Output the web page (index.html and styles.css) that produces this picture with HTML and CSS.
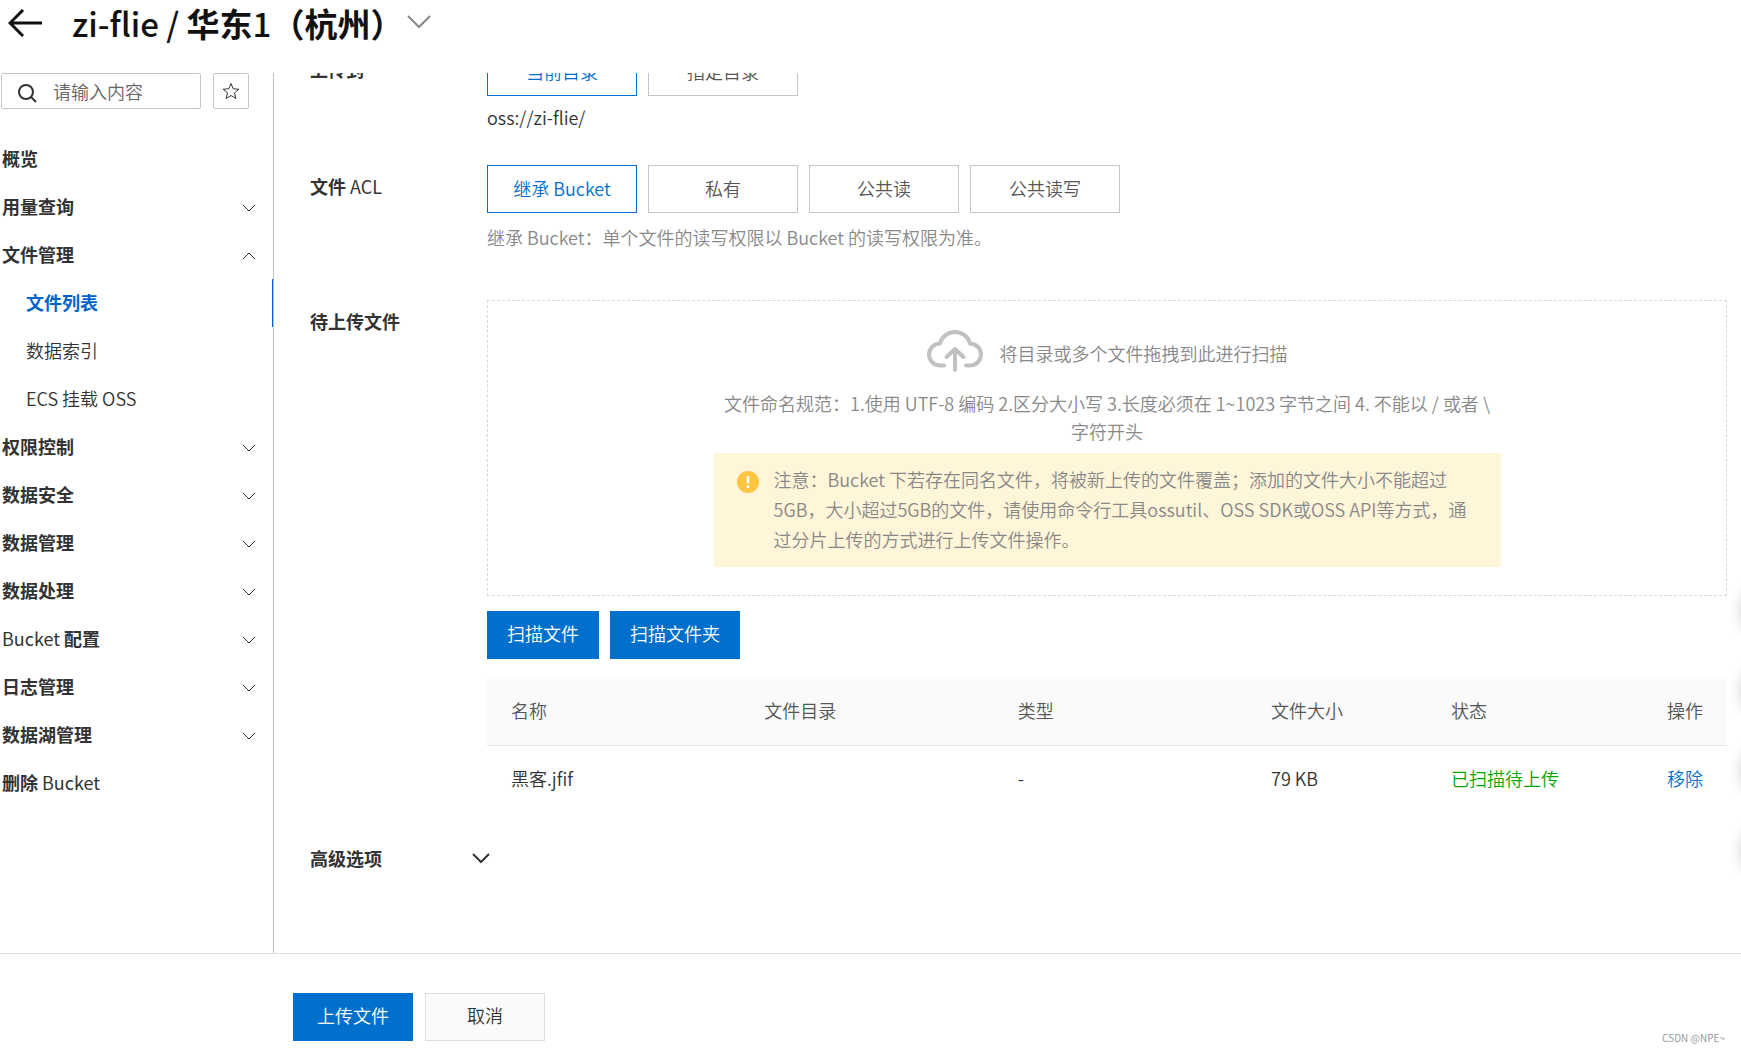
FILE: index.html
```html
<!DOCTYPE html>
<html lang="zh-CN">
<head>
<meta charset="utf-8">
<meta name="viewport" content="width=device-width, initial-scale=1">
<title>zi-flie / 华东1（杭州）</title>
<link rel="stylesheet" href="styles.css">
</head>
<body>
<svg class="sprite" aria-hidden="true">
  <symbol id="chevron" viewBox="0 0 14 8"><path d="M1 1l6 6 6-6"/></symbol>
</svg>

<header class="header">
  <a class="back" href="#" aria-label="返回">
    <svg class="icon" width="34" height="28" viewBox="0 0 34 28"><path d="M15 1L2 14l13 13M2 14h32" stroke-width="3"/></svg>
  </a>
  <h1 class="title"><span>zi-flie / </span>华东<span>1</span>（杭州）</h1>
  <button class="title-toggle" type="button" aria-label="切换 Bucket">
    <svg class="icon" width="24" height="14" viewBox="0 0 24 14"><path d="M1 1l11 11L23 1" stroke-width="2"/></svg>
  </button>
</header>

<div class="body">
  <aside class="sidebar">
    <div class="search-row">
      <label class="search">
        <svg class="icon" width="20" height="20" viewBox="0 0 20 20"><circle cx="9" cy="9" r="7" stroke-width="2"/><path d="M14 14l5 5" stroke-width="2"/></svg>
        <input type="text" placeholder="请输入内容" aria-label="请输入内容">
      </label>
      <button class="star" type="button" aria-label="收藏">
        <svg class="icon" width="18" height="18" viewBox="0 0 18 18"><path d="M9 1.500l2.200 5.300 5.700.4-4.400 3.700 1.400 5.600L9 13.500l-4.900 3 1.400-5.600-4.400-3.700 5.700-.4z"/></svg>
      </button>
    </div>
    <nav class="menu">
      <a class="item" href="#">概览</a>
      <a class="item" href="#">用量查询<svg class="icon arrow"><use href="#chevron"/></svg></a>
      <a class="item" href="#">文件管理<svg class="icon arrow up"><use href="#chevron"/></svg></a>
      <a class="item sub active" href="#">文件列表</a>
      <a class="item sub" href="#">数据索引</a>
      <a class="item sub" href="#">ECS 挂载 OSS</a>
      <a class="item" href="#">权限控制<svg class="icon arrow"><use href="#chevron"/></svg></a>
      <a class="item" href="#">数据安全<svg class="icon arrow"><use href="#chevron"/></svg></a>
      <a class="item" href="#">数据管理<svg class="icon arrow"><use href="#chevron"/></svg></a>
      <a class="item" href="#">数据处理<svg class="icon arrow"><use href="#chevron"/></svg></a>
      <a class="item" href="#"><span><span class="latin">Bucket </span>配置</span><svg class="icon arrow"><use href="#chevron"/></svg></a>
      <a class="item" href="#">日志管理<svg class="icon arrow"><use href="#chevron"/></svg></a>
      <a class="item" href="#">数据湖管理<svg class="icon arrow"><use href="#chevron"/></svg></a>
      <a class="item" href="#"><span>删除<span class="latin"> Bucket</span></span></a>
    </nav>
  </aside>

  <main class="main">
    <div class="form">
      <section class="row target">
        <h2 class="label">上传到</h2>
        <div class="field">
          <div class="options">
            <button class="option selected" type="button">当前目录</button>
            <button class="option" type="button">指定目录</button>
          </div>
          <p class="path">oss://zi-flie/</p>
        </div>
      </section>

      <section class="row acl">
        <h2 class="label">文件<span class="latin"> ACL</span></h2>
        <div class="field">
          <div class="options">
            <button class="option selected" type="button">继承 Bucket</button>
            <button class="option" type="button">私有</button>
            <button class="option" type="button">公共读</button>
            <button class="option" type="button">公共读写</button>
          </div>
          <p class="hint">继承 Bucket：单个文件的读写权限以 Bucket 的读写权限为准。</p>
        </div>
      </section>

      <section class="row files">
        <h2 class="label">待上传文件</h2>
        <div class="field">
          <div class="drop">
            <div class="drop-head">
              <svg class="icon" width="56" height="44" viewBox="0 0 56 44"><path d="M17 36.500h-4A11 11 0 0 1 13 14.500A15.500 15.500 0 0 1 43 14.500A11 11 0 0 1 43 36.500h-4M28 41V20M19.500 28l8.500-8 8.500 8" stroke-width="4" stroke-linecap="round" stroke-linejoin="round"/></svg>
              <span>将目录或多个文件拖拽到此进行扫描</span>
            </div>
            <p class="rules">文件命名规范：1.使用 UTF-8 编码 2.区分大小写 3.长度必须在 1~1023 字节之间 4. 不能以 / 或者 \<br>字符开头</p>
            <div class="notice">
              <svg width="22" height="22" viewBox="0 0 22 22"><circle cx="11" cy="11" r="11" fill="#ffc440"/><path d="M11 5v7.500M11 14.500v2.500" stroke="#fff" stroke-width="2.500" fill="none"/></svg>
              <p>注意：Bucket 下若存在同名文件，将被新上传的文件覆盖；添加的文件大小不能超过<br>5GB，大小超过5GB的文件，请使用命令行工具ossutil、OSS SDK或OSS API等方式，通<br>过分片上传的方式进行上传文件操作。</p>
            </div>
          </div>
          <div class="scan">
            <button class="btn primary" type="button">扫描文件</button>
            <button class="btn primary" type="button">扫描文件夹</button>
          </div>
          <table class="table">
            <colgroup><col class="c-wide"><col class="c-wide"><col class="c-wide"><col class="c-size"><col class="c-state"><col class="c-op"></colgroup>
            <thead><tr><th>名称</th><th>文件目录</th><th>类型</th><th>文件大小</th><th>状态</th><th>操作</th></tr></thead>
            <tbody><tr><td>黑客.jfif</td><td></td><td>-</td><td>79 KB</td><td class="ok">已扫描待上传</td><td><a href="#">移除</a></td></tr></tbody>
          </table>
        </div>
      </section>

      <section class="advanced">
        <h2 class="label">高级选项</h2>
        <button type="button" aria-label="展开高级选项"><svg class="icon" width="18" height="11" viewBox="0 0 18 11"><path d="M1 1l8 8 8-8" stroke-width="2"/></svg></button>
      </section>
    </div>
  </main>
</div>

<footer class="footer">
  <button class="btn primary" type="button">上传文件</button>
  <button class="btn" type="button">取消</button>
  <span class="mark">CSDN @NPE~</span>
</footer>

<div class="floats" aria-hidden="true"><i></i><i></i><i></i><i></i></div>
</body>
</html>
```

FILE: styles.css
```css
* { box-sizing: border-box; }

body {
  margin: 0;
  min-height: 100vh;
  display: flex;
  flex-direction: column;
  position: relative;
  overflow-x: hidden;
  background: #fff;
  color: #333;
  font: 350 18px/28px "Noto Sans CJK SC", sans-serif;
}

h1, h2, p { margin: 0; }
a { color: inherit; text-decoration: none; }
button, input { font: inherit; color: inherit; }
button { padding: 0; border: 0; background: none; }
svg { display: block; flex: none; }

.sprite { width: 0; height: 0; position: absolute; }
.icon { fill: none; stroke: currentColor; }
.latin { font-weight: 400; }

.header {
  display: flex;
  align-items: flex-start;
  height: 73px;
  padding-left: 8px;
  color: #111;
}
.back { padding-top: 9px; }
.title {
  margin-left: 30px;
  font-size: 33px;
  line-height: 46px;
  font-weight: 700;
}
.title span { font-weight: 500; }
.title-toggle { padding-top: 15px; margin-left: 4px; color: #888; }

.body { flex: 1; display: flex; }

.sidebar { width: 274px; flex: none; border-right: 1px solid #c0c0c4; }
.search-row { display: flex; gap: 12px; padding-left: 1px; margin-bottom: 26px; }
.search, .star {
  display: flex;
  align-items: center;
  height: 36px;
  border: 1px solid #c0c6cc;
  border-radius: 2px;
}
.search { width: 200px; padding-left: 15px; }
.search .icon { margin-top: 4px; }
.search input { width: 100%; min-width: 0; margin-left: 16px; padding: 0; border: 0; outline: 0; background: none; }
.search input::placeholder { color: #666; opacity: 1; }
.star { width: 36px; justify-content: center; }

.item {
  display: flex;
  align-items: center;
  justify-content: space-between;
  height: 48px;
  padding: 0 17px 2px 2px;
  font-weight: 700;
}
.item.sub { padding-left: 26px; font-weight: 350; }
.item.active { color: #0064c8; font-weight: 700; border-right: 1px solid #0064c8; }
.arrow { width: 14px; height: 8px; margin-top: 3px; }
.arrow.up { transform: rotate(180deg); }

.main { flex: 1; min-width: 0; overflow: hidden; }
.form { margin-top: -25px; padding: 0 14px 0 36px; }
.row { display: flex; }
.label { width: 177px; flex: none; font-size: 18px; line-height: 28px; font-weight: 700; }
.field { flex: 1; min-width: 0; }
.row .label { padding-top: 7px; }

.options { display: flex; gap: 11px; }
.option { width: 150px; height: 48px; padding-bottom: 2px; border: 1px solid #c4c6c8; color: #555; }
.option.selected { border-color: #0070cc; color: #0070cc; }
.path { padding-top: 7px; }
.hint { padding-top: 10px; color: #888; }
.target { min-height: 117px; }
.acl { min-height: 135px; }

.drop {
  height: 296px;
  padding-top: 28px;
  border: 1px dashed #d8d8d8;
  color: #888;
  text-align: center;
}
.drop-head { display: flex; justify-content: center; align-items: center; gap: 17px; height: 44px; margin-bottom: 16px; }
.drop-head svg { color: #c1c1c1; }
.drop-head span { padding-top: 4px; }
.notice {
  display: flex;
  gap: 15px;
  width: 787px;
  max-width: 100%;
  margin: 8px auto 0;
  padding: 11px 23px 13px;
  background: #fff5d9;
  line-height: 30px;
  text-align: left;
}
.notice svg { margin-top: 7px; }

.scan { display: flex; gap: 11px; margin: 15px 0 18px; }
.btn { height: 48px; padding: 0 19px 4px; border: 1px solid #ddd; background: #fafafa; }
.btn.primary { border-color: #0070cc; background: #0070cc; color: #fff; }

.table { width: 100%; border-collapse: separate; border-spacing: 0; table-layout: fixed; }
.table th, .table td { padding: 0 0 3px 24px; text-align: left; font-weight: 350; }
.table th { height: 69px; background: #fafafa; color: #555; border-bottom: 1px solid #e6e7eb; }
.table td { height: 66px; }
.c-size { width: 180px; }
.c-state { width: 216px; }
.c-op { width: 84px; }
.table .ok { color: #00a700; }
.table td a { color: #0070cc; }

.advanced { display: flex; align-items: center; margin: 32px 0 60px; }
.advanced .label { width: 162px; }

.footer {
  display: flex;
  align-items: flex-start;
  gap: 12px;
  height: 99px;
  padding: 39px 16px 0 293px;
  border-top: 1px solid #ddd;
}
.footer .btn { width: 120px; }
.mark { margin: 37px 0 0 auto; font: 10px/16px "Noto Sans CJK SC", sans-serif; color: #999; }

/* Round side buttons parked beyond the right edge; only their shadow shows. */
.floats {
  position: absolute;
  left: 100%;
  top: 586px;
  display: grid;
  gap: 30px;
}
.floats i { width: 50px; height: 50px; border-radius: 50%; box-shadow: 0 0 14px rgba(0, 0, 0, .2); }
```
